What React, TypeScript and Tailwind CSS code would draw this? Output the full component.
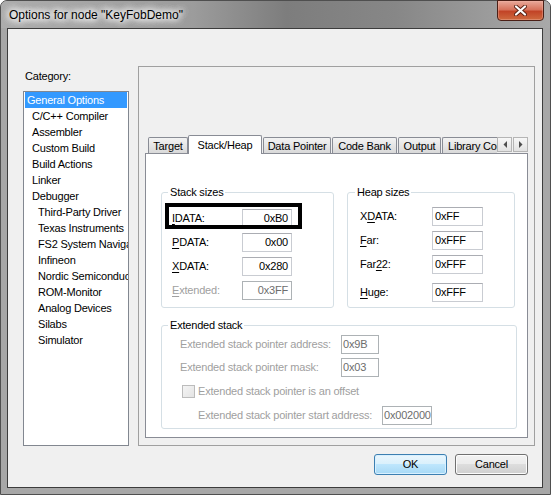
import React, { ReactNode } from 'react';

type Cat = { label: string; level: 0 | 1 | 2 };

const categories: Cat[] = [
  { label: 'General Options', level: 0 },
  { label: 'C/C++ Compiler', level: 1 },
  { label: 'Assembler', level: 1 },
  { label: 'Custom Build', level: 1 },
  { label: 'Build Actions', level: 1 },
  { label: 'Linker', level: 1 },
  { label: 'Debugger', level: 1 },
  { label: 'Third-Party Driver', level: 2 },
  { label: 'Texas Instruments', level: 2 },
  { label: 'FS2 System Navigator', level: 2 },
  { label: 'Infineon', level: 2 },
  { label: 'Nordic Semiconductor', level: 2 },
  { label: 'ROM-Monitor', level: 2 },
  { label: 'Analog Devices', level: 2 },
  { label: 'Silabs', level: 2 },
  { label: 'Simulator', level: 2 },
];

const levelClass = {
  0: 'mx-[1px] pl-[2px] bg-[#3399ff] text-white',
  1: 'pl-[8px]',
  2: 'pl-[14px]',
};

interface EditProps {
  value: string;
  className: string;
  right?: boolean;
  disabled?: boolean;
}

// Win7 style edit box
function Edit({ value, className, right, disabled }: EditProps) {
  const align = right ? 'text-right pr-[3px]' : 'text-left pl-[2px]';
  const state = disabled
    ? 'border-[#adb2b5] text-[#6d6d6d]'
    : 'border-[#c9ccd2] border-t-[#abadb3] text-black';
  return (
    <div
      className={`h-[19px] shrink-0 overflow-hidden whitespace-nowrap border bg-white leading-[17px] ${align} ${state} ${className}`}
    >
      {value}
    </div>
  );
}

function U({ children }: { children: ReactNode }) {
  return <span className="underline underline-offset-[2px]">{children}</span>;
}

function Tab({ label, className }: { label: string; className: string }) {
  return (
    <div
      className={`flex h-[16px] items-center justify-center rounded-t-[2px] border border-b-0 border-[#898c95] bg-linear-to-b from-[#f3f3f3] to-[#d9d9d9] leading-[14px] ${className}`}
    >
      {label}
    </div>
  );
}

function ArrowBtn({ dir }: { dir: 'left' | 'right' }) {
  return (
    <div className="mb-[1px] flex h-[15px] w-[15px] items-center justify-center border border-[#b5b5b5] bg-linear-to-b from-[#f7f7f7] to-[#e2e2e2]">
      <svg width="4" height="7" viewBox="0 0 4 7">
        {dir === 'left' ? (
          <polygon points="4,0 4,7 0.5,3.5" fill="#4d4d4d" />
        ) : (
          <polygon points="0,0 0,7 3.5,3.5" fill="#4d4d4d" />
        )}
      </svg>
    </div>
  );
}

export default function App() {
  return (
    <div className="h-[495px] w-[551px] bg-white font-['Liberation_Sans',Arial,sans-serif] text-[11px] tracking-[-0.2px] text-black">
      <div className="flex h-[495px] w-[551px] flex-col rounded-t-[7px] border border-[#4f4f4f] bg-[#a7a7a7]">
        {/* Title bar */}
        <div className="flex h-[27px] shrink-0 items-start rounded-t-[6px] bg-[linear-gradient(90deg,#adadad_0%,#9c9c9c_35%,#7d7d7d_52%,#878787_72%,#a9a9a9_100%)] pl-[8px]">
          <span className="mt-[6px] text-[12px] leading-[16px] tracking-normal [text-shadow:0_0_9px_#fff,0_0_9px_#fff,0_0_9px_#fff,0_0_6px_#fff]">
            {'Options for node "KeyFobDemo"'}
          </span>
          <div className="-mt-[1px] mr-[6px] ml-auto flex h-[21px] w-[47px] items-center justify-center rounded-b-[4px] border border-[#4b1f16] bg-[linear-gradient(#e9a99a_0%,#d7735c_45%,#c24427_55%,#cf6a3f_100%)] shadow-[inset_0_0_0_1px_#f2b7a766]">
            <svg width="13" height="11" viewBox="0 0 13 11">
              <path d="M2 1.5 L11 9.5 M11 1.5 L2 9.5" stroke="#5a2215" strokeWidth="4" strokeLinecap="round" />
              <path d="M2 1.5 L11 9.5 M11 1.5 L2 9.5" stroke="#ffffff" strokeWidth="2.2" strokeLinecap="round" />
            </svg>
          </div>
        </div>

        {/* Client area */}
        <div className="mx-[6px] flex h-[460px] w-[536px] shrink-0 flex-col border border-[#3c3c3c] bg-[#f0f0f0]">
          <div className="flex h-[380px] pt-0 pl-[15px] mt-[37px]">
            {/* Category list */}
            <div className="flex w-[106px] flex-col pt-[3px]">
              <div className="ml-[2px] h-[14px] leading-[14px]">Category:</div>
              <div className="mt-[8px] flex-1 overflow-hidden border border-[#828790] bg-white">
                {categories.map((c) => (
                  <div
                    key={c.label}
                    className={`h-[16px] overflow-hidden whitespace-nowrap leading-[16px] ${levelClass[c.level]}`}
                  >
                    {c.label}
                  </div>
                ))}
              </div>
            </div>

            {/* Options panel */}
            <div className="ml-[9px] flex w-[397px] flex-col justify-end border border-[#a0a0a0] px-[6px] pb-[7px]">
              {/* Tab strip */}
              <div className="flex h-[18px] items-end pl-[3px]">
                <Tab label="Target" className="w-[40px]" />
                <div className="relative z-10 -mb-[1px] flex h-[19px] w-[74px] items-start justify-center rounded-t-[2px] border border-b-0 border-[#898c95] bg-white pt-[2px] leading-[14px]">
                  Stack/Heap
                </div>
                <Tab label="Data Pointer" className="ml-[1px] w-[68px]" />
                <Tab label="Code Bank" className="ml-[1px] w-[65px]" />
                <Tab label="Output" className="ml-[1px] w-[43px]" />
                <div className="ml-[1px] flex h-[16px] w-[55px] items-center overflow-hidden whitespace-nowrap rounded-tl-[2px] border border-r-0 border-b-0 border-[#898c95] bg-linear-to-b from-[#f3f3f3] to-[#d9d9d9] pl-[5px] leading-[14px]">
                  Library Configuration
                </div>
                <ArrowBtn dir="left" />
                <div className="ml-[1px]">
                  <ArrowBtn dir="right" />
                </div>
              </div>

              {/* Tab page */}
              <div className="flex h-[285px] flex-col border border-[#898c95] bg-white pt-[31px] pr-[10px] pl-[15px]">
                <div className="flex">
                  <fieldset className="w-[173px] min-w-0 rounded-[3px] border border-[#d5dfe5]">
                    <legend className="ml-[6px] px-[2px] leading-[14px]">Stack sizes</legend>
                    <div className="pt-[7px] pb-[5px] pl-[10px]">
                      <div className="relative flex h-[24px] items-center">
                        <span className="w-[70px]">
                          <U>I</U>DATA:
                        </span>
                        <Edit value="0xB0" right className="w-[50px]" />
                        <div className="absolute -top-[3px] -left-[7px] h-[26px] w-[137px] border-[4px] border-black" />
                      </div>
                      <div className="flex h-[24px] items-center">
                        <span className="w-[70px]">
                          <U>P</U>DATA:
                        </span>
                        <Edit value="0x00" right className="w-[50px]" />
                      </div>
                      <div className="flex h-[24px] items-center">
                        <span className="w-[70px]">
                          <U>X</U>DATA:
                        </span>
                        <Edit value="0x280" right className="w-[50px]" />
                      </div>
                      <div className="flex h-[24px] items-center">
                        <span className="w-[70px] text-[#a0a0a0]">
                          <U>E</U>xtended:
                        </span>
                        <Edit value="0x3FF" right disabled className="w-[50px]" />
                      </div>
                    </div>
                  </fieldset>

                  <fieldset className="mr-[2px] ml-[13px] w-[168px] min-w-0 rounded-[3px] border border-[#d5dfe5]">
                    <legend className="ml-[7px] px-[2px] leading-[14px]">Heap sizes</legend>
                    <div className="pt-[5px] pl-[12px]">
                      <div className="flex h-[24px] items-center">
                        <span className="w-[72px]">
                          X<U>D</U>ATA:
                        </span>
                        <Edit value="0xFF" className="w-[51px]" />
                      </div>
                      <div className="flex h-[24px] items-center">
                        <span className="w-[72px]">
                          <U>F</U>ar:
                        </span>
                        <Edit value="0xFFF" className="w-[51px]" />
                      </div>
                      <div className="flex h-[24px] items-center">
                        <span className="w-[72px]">
                          Far<U>2</U>2:
                        </span>
                        <Edit value="0xFFF" className="w-[51px]" />
                      </div>
                      <div className="mt-[4px] flex h-[24px] items-center">
                        <span className="w-[72px]">
                          <U>H</U>uge:
                        </span>
                        <Edit value="0xFFF" className="w-[51px]" />
                      </div>
                    </div>
                  </fieldset>
                </div>

                <fieldset className="mt-[10px] w-[356px] min-w-0 rounded-[3px] border border-[#d5dfe5]">
                  <legend className="ml-[6px] px-[2px] leading-[14px]">Extended stack</legend>
                  <div className="pt-[1px] pb-[1px] pl-[18px] text-[#a0a0a0]">
                    <div className="flex h-[23px] items-center">
                      <span className="w-[161px]">Extended stack pointer address:</span>
                      <Edit value="0x9B" disabled className="w-[38px] !pl-[1px]" />
                    </div>
                    <div className="flex h-[23px] items-center">
                      <span className="w-[161px]">Extended stack pointer mask:</span>
                      <Edit value="0x03" disabled className="w-[38px] !pl-[1px]" />
                    </div>
                    <div className="flex h-[24px] items-center pl-[2px]">
                      <div className="h-[13px] w-[13px] border border-[#bcbcbc] bg-linear-to-br from-[#f4f4f4] to-[#e4e4e4]" />
                      <span className="ml-[3px]">Extended stack pointer is an offset</span>
                    </div>
                    <div className="flex h-[24px] items-center pl-[18px]">
                      <span className="w-[184px]">Extended stack pointer start address:</span>
                      <Edit value="0x002000" disabled className="w-[50px] !pl-[1px]" />
                    </div>
                  </div>
                </fieldset>
              </div>
            </div>
          </div>

          {/* Dialog buttons */}
          <div className="mt-[8px] flex justify-end gap-[8px] pr-[14px]">
            <button className="h-[21px] w-[73px] rounded-[3px] border border-[#3c7fb1] bg-[linear-gradient(#eaf6fd_0%,#d9f0fc_50%,#bee6fd_50%,#a7d9f5_100%)] leading-[19px] shadow-[inset_0_0_0_1px_#d8f0ff]">
              OK
            </button>
            <button className="h-[21px] w-[73px] rounded-[3px] border border-[#707070] bg-[linear-gradient(#f2f2f2_0%,#ebebeb_50%,#dddddd_50%,#cfcfcf_100%)] leading-[19px] shadow-[inset_0_0_0_1px_#fcfcfc]">
              Cancel
            </button>
          </div>
        </div>
      </div>
    </div>
  );
}
